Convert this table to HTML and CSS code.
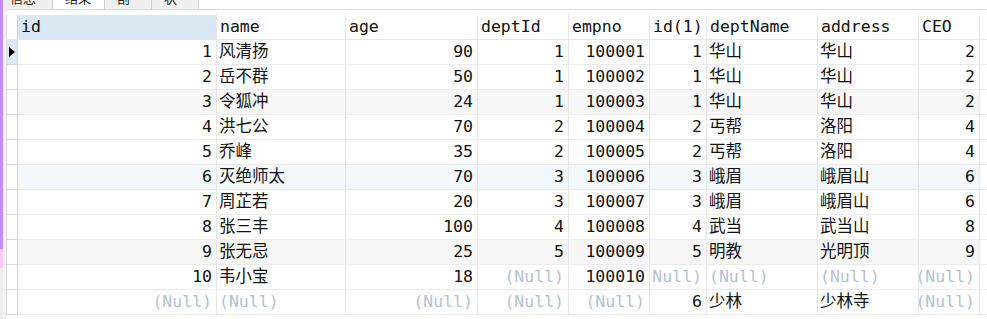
FILE: index.html
```html
<!DOCTYPE html>
<html lang="zh-CN">
<head>
  <meta charset="UTF-8">
  <title>结果1</title>
  <link rel="stylesheet" href="styles.css">
</head>
<body>
  <div class="frame">
    <div class="strip">
      <div class="strip-top"></div>
      <div class="strip-mid"></div>
      <div class="strip-end"></div>
    </div>
    <div class="gutter"></div>

    <div class="main">
      <div class="tabbar">
        <div class="tab tab-info">信息</div>
        <div class="tab active">结果1</div>
        <div class="tab">剖析</div>
        <div class="tab">状态</div>
      </div>

      <div class="grid">
        <div class="row head">
          <div class="cell mark"></div>
          <div class="cell sorted">id</div>
          <div class="cell">name</div>
          <div class="cell">age</div>
          <div class="cell">deptId</div>
          <div class="cell">empno</div>
          <div class="cell">id(1)</div>
          <div class="cell">deptName</div>
          <div class="cell">address</div>
          <div class="cell">CEO</div>
        </div>

        <div class="row">
          <div class="cell mark current">
            <svg width="7" height="10" viewBox="0 0 7 10"><polygon points="0,0 6,5 0,10" fill="#000"/></svg>
          </div>
          <div class="cell num">1</div><div class="cell">风清扬</div><div class="cell num">90</div><div class="cell num">1</div><div class="cell num">100001</div><div class="cell num">1</div><div class="cell">华山</div><div class="cell">华山</div><div class="cell num">2</div>
        </div>
        <div class="row">
          <div class="cell mark"></div>
          <div class="cell num">2</div><div class="cell">岳不群</div><div class="cell num">50</div><div class="cell num">1</div><div class="cell num">100002</div><div class="cell num">1</div><div class="cell">华山</div><div class="cell">华山</div><div class="cell num">2</div>
        </div>
        <div class="row striped">
          <div class="cell mark"></div>
          <div class="cell num">3</div><div class="cell">令狐冲</div><div class="cell num">24</div><div class="cell num">1</div><div class="cell num">100003</div><div class="cell num">1</div><div class="cell">华山</div><div class="cell">华山</div><div class="cell num">2</div>
        </div>
        <div class="row">
          <div class="cell mark"></div>
          <div class="cell num">4</div><div class="cell">洪七公</div><div class="cell num">70</div><div class="cell num">2</div><div class="cell num">100004</div><div class="cell num">2</div><div class="cell">丐帮</div><div class="cell">洛阳</div><div class="cell num">4</div>
        </div>
        <div class="row">
          <div class="cell mark"></div>
          <div class="cell num">5</div><div class="cell">乔峰</div><div class="cell num">35</div><div class="cell num">2</div><div class="cell num">100005</div><div class="cell num">2</div><div class="cell">丐帮</div><div class="cell">洛阳</div><div class="cell num">4</div>
        </div>
        <div class="row hover">
          <div class="cell mark"></div>
          <div class="cell num">6</div><div class="cell">灭绝师太</div><div class="cell num">70</div><div class="cell num">3</div><div class="cell num">100006</div><div class="cell num">3</div><div class="cell">峨眉</div><div class="cell">峨眉山</div><div class="cell num">6</div>
        </div>
        <div class="row">
          <div class="cell mark"></div>
          <div class="cell num">7</div><div class="cell">周芷若</div><div class="cell num">20</div><div class="cell num">3</div><div class="cell num">100007</div><div class="cell num">3</div><div class="cell">峨眉</div><div class="cell">峨眉山</div><div class="cell num">6</div>
        </div>
        <div class="row">
          <div class="cell mark"></div>
          <div class="cell num">8</div><div class="cell">张三丰</div><div class="cell num">100</div><div class="cell num">4</div><div class="cell num">100008</div><div class="cell num">4</div><div class="cell">武当</div><div class="cell">武当山</div><div class="cell num">8</div>
        </div>
        <div class="row striped">
          <div class="cell mark"></div>
          <div class="cell num">9</div><div class="cell">张无忌</div><div class="cell num">25</div><div class="cell num">5</div><div class="cell num">100009</div><div class="cell num">5</div><div class="cell">明教</div><div class="cell">光明顶</div><div class="cell num">9</div>
        </div>
        <div class="row">
          <div class="cell mark"></div>
          <div class="cell num">10</div><div class="cell">韦小宝</div><div class="cell num">18</div><div class="cell num null">(Null)</div><div class="cell num">100010</div><div class="cell num null">(Null)</div><div class="cell null">(Null)</div><div class="cell null">(Null)</div><div class="cell num null">(Null)</div>
        </div>
        <div class="row">
          <div class="cell mark"></div>
          <div class="cell num null">(Null)</div><div class="cell null">(Null)</div><div class="cell num null">(Null)</div><div class="cell num null">(Null)</div><div class="cell num null">(Null)</div><div class="cell num">6</div><div class="cell">少林</div><div class="cell">少林寺</div><div class="cell num null">(Null)</div>
        </div>
      </div>
    </div>
  </div>
</body>
</html>
```

FILE: styles.css
```css
body {
  margin: 0;
  background-color: #ffffff;
  font-family: "DejaVu Sans Mono", "Noto Sans CJK SC", monospace;
  overflow: hidden;
}

.frame {
  display: flex;
  width: 987px;
  height: 319px;
  overflow: hidden;
}

/* barra lateral colorida */
.strip {
  width: 3px;
  display: flex;
  flex-direction: column;
}

.strip-top {
  height: 249px;
  background-color: #c68af7;
}

.strip-mid {
  height: 19px;
  background-color: #fcc9f6;
}

.strip-end {
  flex: 1;
  background-color: #ececec;
}

.gutter {
  width: 3px;
  background-color: #f3f3f3;
}

.main {
  flex: 1;
  display: flex;
  flex-direction: column;
}

/* abas (cortadas no topo) */
.tabbar {
  height: 9px;
  overflow: hidden;
  display: flex;
  align-items: flex-start;
  border-bottom: 1px solid #dcdcdc;
  font-family: "Noto Sans CJK SC", sans-serif;
  font-size: 13px;
  color: #222;
}

.tab {
  height: 22px;
  margin-top: -13px;
  line-height: 22px;
  box-sizing: border-box;
  padding: 0 12px;
  background-color: #f0f0f0;
  border-right: 1px solid #cfcfcf;
  width: 47px;
}

.tab-info {
  width: 47px;
  padding-left: 4px;
}

.tab.active {
  background-color: #ffffff;
  width: 52px;
}

.grid {
  margin-top: 5px;
  display: flex;
  flex-direction: column;
}

.row {
  display: grid;
  grid-template-columns: 12px 199px 129px 132px 91px 81px 57px 111px 101px 61px;
  height: 25px;
  box-sizing: border-box;
  border-bottom: 1px solid #ebebeb;
  font-size: 16.5px;
  color: #111;
}

.row.striped .cell {
  background-color: #f7f7f7;
}

.row.hover .cell {
  background-color: #f3f8fd;
}

.row.head {
  border-bottom-color: #e6e6e6;
}

.cell {
  box-sizing: border-box;
  border-right: 1px solid #e6e6e6;
  padding: 0 4px 0 2px;
  line-height: 24px;
  white-space: nowrap;
  overflow: hidden;
  display: flex;
  align-items: center;
}

.head .cell {
  padding-left: 3px;
}

.head .cell.sorted {
  background-color: #dae8f6;
}

.cell.num {
  justify-content: flex-end;
}

.cell.null {
  color: #b5bfd4;
}

.row .cell.mark {
  border-left: 1px solid #d9d9d9;
  border-right: 1px solid #d2d2d2;
  background-color: #ffffff;
  padding: 0;
  justify-content: center;
  box-shadow: 0 1px 0 #d8d8d8;
}

.row.head .cell.mark {
  box-shadow: none;
}

.row .cell.mark.current {
  background-color: #dce8f5;
}
```
